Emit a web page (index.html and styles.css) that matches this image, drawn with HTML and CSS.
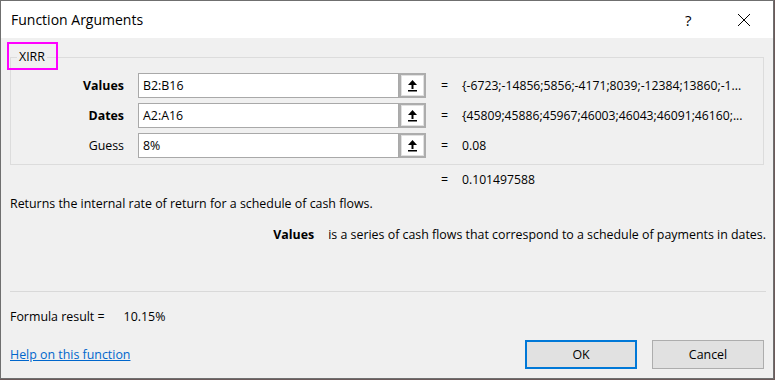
FILE: index.html
```html
<!DOCTYPE html>
<html lang="en">
  <head>
    <meta charset="UTF-8" />
    <title>Function Arguments</title>
    <link rel="stylesheet" href="styles.css">
  </head>
  <body>
    <div class="dialog">
      <div class="titlebar">
        <span class="title">Function Arguments</span>
        <span class="help">?</span>
        <span class="close">
          <svg width="14" height="14" viewBox="0 0 14 14">
            <path d="M1 1 L13 13 M13 1 L1 13" stroke="#000" stroke-width="1" fill="none" />
          </svg>
        </span>
      </div>

      <div class="content">
        <fieldset class="group">
          <legend>XIRR</legend>

          <div class="arg-row">
            <span class="arg-name bold">Values</span>
            <div class="arg-input">B2:B16</div>
            <span class="ref-btn"><span class="ref-inner">
              <svg width="9" height="12" viewBox="0 0 9 12">
                <path d="M4.5 0 L9 5 L0 5 Z" fill="#000" />
                <rect x="3.5" y="5" width="2" height="4" fill="#000" />
                <rect x="0" y="10" width="9" height="1.5" fill="#000" />
              </svg>
            </span></span>
            <span class="eq">=</span>
            <span class="arg-value">{-6723;-14856;5856;-4171;8039;-12384;13860;-1...</span>
          </div>

          <div class="arg-row">
            <span class="arg-name bold">Dates</span>
            <div class="arg-input">A2:A16</div>
            <span class="ref-btn"><span class="ref-inner">
              <svg width="9" height="12" viewBox="0 0 9 12">
                <path d="M4.5 0 L9 5 L0 5 Z" fill="#000" />
                <rect x="3.5" y="5" width="2" height="4" fill="#000" />
                <rect x="0" y="10" width="9" height="1.5" fill="#000" />
              </svg>
            </span></span>
            <span class="eq">=</span>
            <span class="arg-value">{45809;45886;45967;46003;46043;46091;46160;...</span>
          </div>

          <div class="arg-row">
            <span class="arg-name">Guess</span>
            <div class="arg-input">8%</div>
            <span class="ref-btn"><span class="ref-inner">
              <svg width="9" height="12" viewBox="0 0 9 12">
                <path d="M4.5 0 L9 5 L0 5 Z" fill="#000" />
                <rect x="3.5" y="5" width="2" height="4" fill="#000" />
                <rect x="0" y="10" width="9" height="1.5" fill="#000" />
              </svg>
            </span></span>
            <span class="eq">=</span>
            <span class="arg-value">0.08</span>
          </div>
        </fieldset>

        <div class="result-row">
          <span class="eq">=</span>
          <span class="arg-value">0.101497588</span>
        </div>

        <p class="desc">Returns the internal rate of return for a schedule of cash flows.</p>
        <p class="arg-desc"><span class="bold">Values</span><span class="arg-text">is a series of cash flows that correspond to a schedule of payments in dates.</span></p>

        <div class="separator"></div>

        <div class="formula">Formula result =<span class="formula-value">10.15%</span></div>

        <div class="footer">
          <a href="#" class="help-link">Help on this function</a>
          <div class="buttons">
            <button class="btn ok">OK</button>
            <button class="btn">Cancel</button>
          </div>
        </div>
      </div>

      <!-- highlight around the function name -->
      <div class="highlight"></div>
    </div>
  </body>
</html>
```

FILE: styles.css
```css
* {
  margin: 0;
  padding: 0;
  box-sizing: border-box;
}

body {
  background: #6b5a5a;
  font-family: "Open Sans", "Noto Sans", sans-serif;
  font-size: 12.4px;
  color: #000;
  width: 775px;
  height: 380px;
  overflow: hidden;
}

.dialog {
  position: relative;
  width: 774px;
  height: 379px;
  border: 1px solid #6f6f6f;
  background: #f0f0f0;
}

.titlebar {
  height: 37px;
  background: #fff;
  display: flex;
  align-items: center;
  padding-left: 10px;
}

.title {
  font-size: 14px;
  flex: 1;
}

.help {
  font-size: 15px;
  width: 52px;
}

.close {
  display: flex;
  width: 36px;
}

.content {
  padding: 0 7px 0 9px;
}

.group {
  border: 1px solid #dcdcdc;
  margin: 11px 2px 0 0;
  padding: 8px 0 6px 0;
  display: flex;
  flex-direction: column;
  gap: 5px;
}

.group legend {
  margin-left: 6px;
  padding: 0 2px;
  line-height: 16px;
}

.arg-row {
  display: flex;
  align-items: center;
  height: 25px;
}

.arg-name {
  width: 113px;
  text-align: right;
  margin-right: 14px;
}

.bold {
  font-weight: bold;
}

.arg-input {
  width: 261px;
  height: 25px;
  border: 1px solid #a9a9a9;
  background: #fff;
  padding-left: 4px;
  line-height: 23px;
}

.ref-btn {
  width: 27px;
  height: 25px;
  border: 2px solid #adadad;
  background: #e1e1e1;
  padding: 1px;
  display: flex;
}

.ref-inner {
  flex: 1;
  background: #fff;
  display: flex;
  align-items: center;
  justify-content: center;
}

.eq {
  width: 36px;
  text-align: right;
  padding-right: 14px;
}

.arg-value {
  white-space: nowrap;
  font-size: 12.2px;
}

.result-row {
  display: flex;
  margin: 8px 0 0 416px;
  line-height: 14px;
}

.desc {
  margin-top: 9px;
  line-height: 16px;
}

.arg-desc {
  margin-top: 15px;
  line-height: 16px;
  text-align: right;
}

.arg-text {
  margin-left: 14px;
}

.separator {
  margin-top: 48px;
  height: 1px;
  background: #d9d9d9;
}

.formula {
  margin-top: 17px;
  line-height: 16px;
}

.formula-value {
  margin-left: 19px;
}

.footer {
  display: flex;
  justify-content: space-between;
  align-items: center;
  margin-top: 15px;
  padding-right: 2px;
}

.help-link {
  color: #0066cc;
  text-decoration: underline;
}

.buttons {
  display: flex;
  gap: 15px;
}

.btn {
  width: 112px;
  height: 29px;
  background: #e1e1e1;
  border: 1px solid #adadad;
  font-family: inherit;
  font-size: 12.4px;
  color: #000;
}

.btn.ok {
  border: 2px solid #0078d7;
}

.highlight {
  position: absolute;
  left: 6px;
  top: 41px;
  width: 51px;
  height: 28px;
  border: 2px solid #ff00ff;
}
```
